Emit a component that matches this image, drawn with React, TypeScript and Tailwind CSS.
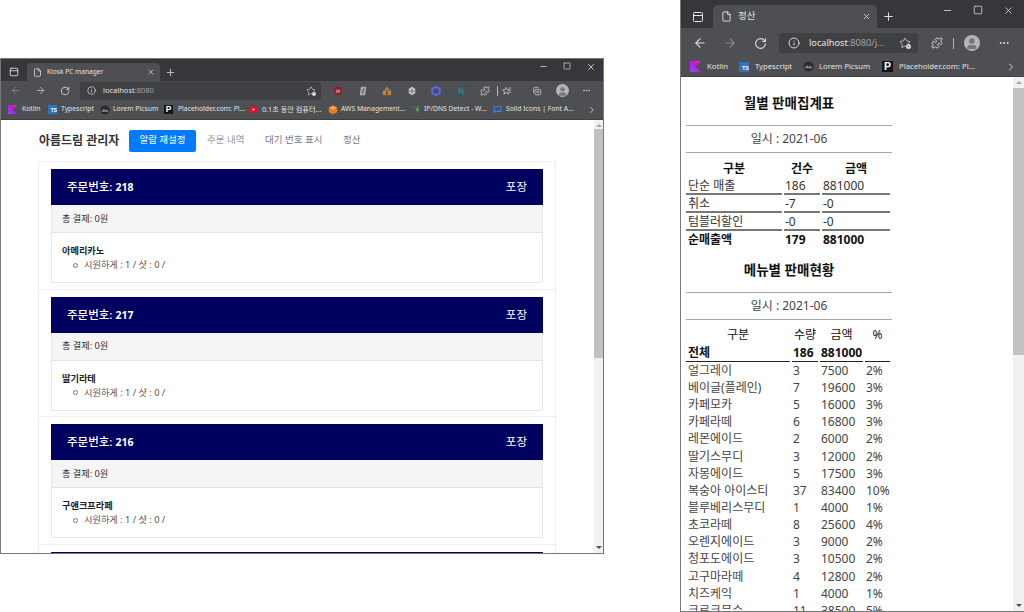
import React from "react";
import { ArrowLeft, ArrowRight, RotateCw, Info, Plus, X, Minus, Square, ChevronRight, Puzzle, MoreHorizontal, File, PanelTop, Star, User } from "lucide-react";

const KR = "font-['Noto_Sans','Noto_Sans_CJK_KR',sans-serif]";

const KotlinIcon = ({ s }: { s: number }) => (
  <svg width={s} height={s} viewBox="0 0 24 24" className="shrink-0">
    <defs><linearGradient id="kg" x1="0" y1="1" x2="1" y2="0"><stop offset="0" stopColor="#7f52ff" /><stop offset="0.6" stopColor="#c711e1" /><stop offset="1" stopColor="#e44857" /></linearGradient></defs>
    <path d="M0 24V0h24L12 12l12 12z" fill="url(#kg)" />
  </svg>
);
const TsIcon = ({ s }: { s: number }) => (
  <span className="shrink-0 bg-[#2f74c0] text-white font-bold flex items-end justify-end leading-none font-['Liberation_Sans',sans-serif]" style={{ width: s, height: s, fontSize: s * 0.55 }}>TS</span>
);
const PicIcon = ({ s }: { s: number }) => (
  <svg width={s} height={s} viewBox="0 0 24 24" className="shrink-0">
    <circle cx="12" cy="12" r="11" fill="#2a2b2d" />
    <path d="M3 16l6-7 4 4 3-3 5 6z" fill="#8a8b8d" />
  </svg>
);
const PIcon = ({ s }: { s: number }) => (
  <span className="shrink-0 bg-[#151515] text-white font-bold flex items-center justify-center leading-none font-['Liberation_Sans',sans-serif]" style={{ width: s, height: s, fontSize: s * 0.95 }}>P</span>
);
const YtIcon = ({ s }: { s: number }) => (
  <svg width={s} height={s} viewBox="0 0 24 24" className="shrink-0">
    <rect x="1" y="4" width="22" height="16" rx="4" fill="#e8112b" />
    <path d="M10 8.500l6 3.500-6 3.500z" fill="#fff" />
  </svg>
);
const AwsIcon = ({ s }: { s: number }) => (
  <svg width={s} height={s} viewBox="0 0 24 24" className="shrink-0">
    <path d="M12 1l10 5.500v11L12 23 2 17.500v-11z" fill="#ee7a1c" />
    <path d="M12 1l10 5.500-10 5.500L2 6.500z" fill="#f5a04a" />
  </svg>
);
const DnsIcon = ({ s }: { s: number }) => (
  <svg width={s} height={s} viewBox="0 0 24 24" className="shrink-0">
    <path d="M14 3l-6 10h5l-3 8 8-11h-5l3-7z" fill="#5fb56a" />
    <circle cx="5" cy="5" r="1.500" fill="#9aa0a6" />
  </svg>
);
const FlagIcon = ({ s }: { s: number }) => (
  <svg width={s} height={s} viewBox="0 0 24 24" className="shrink-0" fill="none" stroke="#3b82e6" strokeWidth="3">
    <path d="M3 22V4h18v13H5" />
  </svg>
);
const StarGear = ({ s }: { s: number }) => (
  <span className="relative shrink-0 block" style={{ width: s, height: s }}>
    <Star size={s} strokeWidth={1.6} color="#d5d5d6" />
    <span className="absolute right-0 bottom-0 w-[40%] h-[40%] rounded-full border-2 border-[#d5d5d6] bg-[#3f4043]" />
  </span>
);
const Avatar = ({ s }: { s: number }) => (
  <span className="shrink-0 rounded-full bg-[#b5b5b6] flex items-end justify-center overflow-hidden" style={{ width: s, height: s }}>
    <User size={s * 0.85} color="#77787a" fill="#77787a" />
  </span>
);
const Collections = ({ s }: { s: number }) => (
  <svg width={s} height={s} viewBox="0 0 24 24" fill="none" stroke="#d5d5d6" strokeWidth="1.800" className="shrink-0">
    <rect x="7" y="8" width="14" height="13" rx="3" /><path d="M4 16V7a4 4 0 0 1 4-4h8" /><path d="M10 14h8M14 11v6" />
  </svg>
);
const Fav = ({ s }: { s: number }) => (
  <svg width={s} height={s} viewBox="0 0 24 24" fill="none" stroke="#d5d5d6" strokeWidth="1.800" className="shrink-0">
    <path d="M10 3l2.500 6 6 .5-4.500 4 1.500 6-5.500-3.300L4.500 19.500l1.500-6-4.500-4 6-.5z" /><path d="M16 5h6M18 10h4M18 15h4" />
  </svg>
);

const ExtIcons = () => (
  <>
    <svg width="10" height="10" viewBox="0 0 24 24" className="shrink-0">
      <path d="M12 1l10 3-1 11c-1 4-5 6-9 8-4-2-8-4-9-8L2 4z" fill="#8e1b25" />
      <path d="M8 9v5a2 2 0 0 0 4 0V9M13 9l2 6 2-6" fill="none" stroke="#e9b9b9" strokeWidth="1.800" />
    </svg>
    <svg width="10" height="10" viewBox="0 0 24 24" className="shrink-0">
      <path d="M7 2h13l-3 20H4z" fill="#a9a9ac" />
      <path d="M14 6l-4 12" stroke="#4e4f52" strokeWidth="2.500" />
    </svg>
    <svg width="10" height="10" viewBox="0 0 24 24" className="shrink-0">
      <path d="M12 1l7 9H5z" fill="#8f8577" />
      <rect x="2" y="11" width="20" height="11" fill="#c8842a" />
      <rect x="10" y="13" width="4" height="9" fill="#4e4f52" />
    </svg>
    <svg width="10" height="10" viewBox="0 0 24 24" className="shrink-0">
      <path d="M12 2l8 5v10l-8 5-8-5V7z" fill="#c9c9cb" />
      <path d="M2 12h20M12 6v12" stroke="#6a6a6d" strokeWidth="2" />
    </svg>
    <svg width="10" height="10" viewBox="0 0 24 24" className="shrink-0" fill="none">
      <path d="M12 2l9 5v10l-9 5-9-5V7z" stroke="#5a66e6" strokeWidth="5" />
    </svg>
    <svg width="10" height="10" viewBox="0 0 24 24" className="shrink-0" fill="none">
      <rect x="2" y="2" width="20" height="20" stroke="#1e5f63" strokeWidth="2" strokeDasharray="3 2" />
      <path d="M8 18V6l8 12V6" stroke="#2b8a91" strokeWidth="3" />
    </svg>
    <Puzzle size={10} color="#d5d5d6" className="shrink-0" />
  </>
);

const Bm = ({ icon, text, w, size, gap }: { icon: React.ReactNode; text: string; w: number; size: string; gap: string }) => (
  <div className={`flex items-center shrink-0 ${gap}`} style={{ width: w }}>
    {icon}
    <span className={`${size} text-[#e3e3e4] whitespace-nowrap`}>{text}</span>
  </div>
);

const Scrollbar = ({ thumbTop, thumbH, w }: { thumbTop: number; thumbH: number; w: string }) => (
  <div className={`${w} shrink-0 bg-[#f1f1f1] relative h-full`}>
    <div className="absolute left-1/2 top-[4px] -translate-x-1/2 w-0 h-0 border-x-[3px] border-x-transparent border-b-[3px] border-b-[#a3a3a3]" />
    <div className="absolute left-0 right-0 bg-[#c1c1c1]" style={{ top: thumbTop, height: thumbH }} />
    <div className="absolute left-1/2 bottom-[4px] -translate-x-1/2 w-0 h-0 border-x-[3px] border-x-transparent border-t-[3px] border-t-[#505050]" />
  </div>
);

const orders = [
  { no: 218, item: "아메리카노" },
  { no: 217, item: "딸기라테" },
  { no: 216, item: "구앤크프라페" },
];

const OrderCard = ({ no, item }: { no: number; item: string }) => (
  <div className="px-[12px] pt-[7px] pb-[6px] border-b border-[#eeeeee] h-[127.500px] shrink-0">
    <div className="border border-[#e8e8e8] rounded-[2px] h-[114px]">
      <div className="-mx-px -mt-[1px] bg-[#00005f] h-[36px] flex items-center justify-between pl-[16px] pr-[16px] text-white">
        <span className="text-[11.500px] font-medium">주문번호: <b className="text-[10.500px]">{no}</b></span>
        <span className="text-[11.500px]">포장</span>
      </div>
      <div className="bg-[#f5f5f5] h-[28px] border-b border-[#e3e3e3] flex items-center pl-[10px] text-[9.200px] text-[#333]">총 결제: 0원</div>
      <div className="pl-[10px] pt-[11px] text-[9.200px] leading-[14px] text-[#333]">
        <div className="font-bold text-[#222]">{item}</div>
        <div className="flex items-center pl-[11px] text-[#555]">
          <span className="w-[5px] h-[5px] rounded-full border border-[#777] mr-[6px]" />
          <span>시원하게 : 1 / 샷 : 0 /</span>
        </div>
      </div>
    </div>
  </div>
);

const Th = ({ children, bold = true }: { children?: React.ReactNode; bold?: boolean }) => (
  <th className={`p-0 h-[18px] leading-[17px] text-[12px] ${bold ? "font-bold" : "font-normal"} text-center text-[#111]`}>{children}</th>
);

const Title = ({ t }: { t: string }) => (
  <div className="text-center text-[13.500px] font-bold text-[#111] leading-[18px]">{t}</div>
);
const Hr = () => <div className="h-px bg-[#a8a8a8]" />;
const DateLine = () => <div className="text-center text-[12px] leading-[26px] h-[26px] text-[#444]">일시 : 2021-06</div>;

const summary = [
  ["단순 매출", "186", "881000"],
  ["취소", "-7", "-0"],
  ["텀블러할인", "-0", "-0"],
];

const menu = [
  ["얼그레이", "3", "7500", "2%"],
  ["베이글(플레인)", "7", "19600", "3%"],
  ["카페모카", "5", "16000", "3%"],
  ["카페라떼", "6", "16800", "3%"],
  ["레몬에이드", "2", "6000", "2%"],
  ["딸기스무디", "3", "12000", "2%"],
  ["자몽에이드", "5", "17500", "3%"],
  ["복숭아 아이스티", "37", "83400", "10%"],
  ["블루베리스무디", "1", "4000", "1%"],
  ["초코라떼", "8", "25600", "4%"],
  ["오렌지에이드", "3", "9000", "2%"],
  ["청포도에이드", "3", "10500", "2%"],
  ["고구마라떼", "4", "12800", "2%"],
  ["치즈케익", "1", "4000", "1%"],
  ["크로크무슈", "11", "38500", "5%"],
];

export default function App() {
  return (
    <div className={`relative w-[1024px] h-[612px] overflow-hidden bg-white ${KR}`}>
      {/* Left window */}
      <div className="absolute left-0 top-[58px] w-[604px] h-[496px] border border-[#777] flex flex-col bg-white">
        <div className="h-[22px] bg-[#36373a] flex items-end shrink-0 relative">
          <div className="w-[26px] h-[18px] flex items-center justify-center"><PanelTop size={10} color="#e5e5e5" /></div>
          <div className="w-[133px] h-[18px] bg-[#4e4f52] rounded-t-[4px] flex items-center pl-[6px] pr-[5px]">
            <File size={9} color="#e0e0e0" />
            <span className="ml-[5px] text-[6.600px] text-[#e3e3e4] flex-1 whitespace-nowrap">Kiosk PC manager</span>
            <X size={8} color="#e0e0e0" />
          </div>
          <div className="w-[20px] h-[18px] flex items-center justify-center"><Plus size={11} color="#c5c5c6" /></div>
          <div className="ml-auto flex items-start self-start pt-[3px] pr-[7px] gap-[15px]">
            <Minus size={9} color="#e0e0e0" />
            <Square size={8} color="#e0e0e0" />
            <X size={10} color="#e0e0e0" />
          </div>
        </div>
        <div className="h-[19px] bg-[#4e4f52] flex items-center shrink-0 pl-[9px]">
          <ArrowLeft size={11} color="#85868a" />
          <ArrowRight size={11} color="#b8b8ba" className="ml-[14px]" />
          <RotateCw size={10} color="#dadada" className="ml-[14px]" />
          <div className="ml-[10px] w-[241px] h-[18px] bg-[#3f4043] rounded-[3px] flex items-center pl-[7px] pr-[5px]">
            <Info size={9} color="#d8d8d8" />
            <span className="ml-[7px] text-[7.500px] text-[#e5e5e5]">localhost<span className="text-[#a3a3a5]">:8080</span></span>
            <span className="ml-auto"><StarGear s={10} /></span>
          </div>
          <div className="ml-[12px] flex items-center gap-[14.500px]">
            <ExtIcons />
          </div>
          <span className="ml-[7px] w-px h-[10px] bg-[#b5b5b6]" />
          <span className="ml-[4px]"><Fav s={10} /></span>
          <span className="ml-[20px]"><Collections s={10} /></span>
          <span className="ml-[14px]"><Avatar s={13} /></span>
          <MoreHorizontal size={9} color="#d5d5d6" className="ml-[13px]" />
        </div>
        <div className="h-[20px] bg-[#4e4f52] border-b border-[#3f4043] flex items-center shrink-0 pl-[7px]">
          <Bm icon={<KotlinIcon s={9} />} text="Kotlin" w={40} size="text-[6.800px]" gap="gap-[5px]" />
          <Bm icon={<TsIcon s={9} />} text="Typescript" w={52} size="text-[6.800px]" gap="gap-[4px]" />
          <Bm icon={<PicIcon s={10} />} text="Lorem Picsum" w={64} size="text-[6.800px]" gap="gap-[3px]" />
          <Bm icon={<PIcon s={9} />} text="Placeholder.com: Pl..." w={85} size="text-[6.800px]" gap="gap-[5px]" />
          <Bm icon={<YtIcon s={9} />} text="0.1초 동안 컴퓨터..." w={79} size="text-[7.200px]" gap="gap-[4px]" />
          <Bm icon={<AwsIcon s={10} />} text="AWS Management..." w={84} size="text-[6.800px]" gap="gap-[3px]" />
          <Bm icon={<DnsIcon s={10} />} text="IP/DNS Detect - W..." w={81} size="text-[6.800px]" gap="gap-[2px]" />
          <Bm icon={<FlagIcon s={9} />} text="Solid Icons | Font A..." w={94} size="text-[6.800px]" gap="gap-[4px]" />
          <ChevronRight size={10} color="#d5d5d6" />
        </div>
        <div className="flex-1 flex min-h-0">
          <div className="flex-1 min-w-0 overflow-hidden">
            <div className="flex items-center h-[41px] pl-[38px]">
              <span className="text-[12px] font-bold text-[#333] w-[90px] whitespace-nowrap">아름드림 관리자</span>
              <span className="w-[67px] h-[22px] bg-[#007bff] rounded-[2px] text-white text-[9.500px] flex items-center justify-center">알람 재설정</span>
              <span className="ml-[11px] text-[9.500px] text-[#9a9a9a] w-[58px]">주문 내역</span>
              <span className="text-[9.500px] text-[#7a7a7a] w-[78px]">대기 번호 표시</span>
              <span className="text-[9.500px] text-[#7a7a7a]">정산</span>
            </div>
            <div className="ml-[37px] w-[518px] border border-[#eeeeee] rounded-t-[2px] flex flex-col">
              {orders.map((o) => <OrderCard key={o.no} {...o} />)}
              <div className="px-[12px] pt-[7px]"><div className="h-[10px] bg-[#00005f]" /></div>
            </div>
          </div>
          <Scrollbar thumbTop={9} thumbH={229} w="w-[9px]" />
        </div>
      </div>

      {/* Right window */}
      <div className="absolute left-[680px] top-0 w-[344px] h-[612px] border-l border-b border-[#777] flex flex-col bg-white">
        <div className="h-[28px] bg-[#36373a] flex items-end shrink-0">
          <div className="w-[32px] h-[23px] flex items-center justify-center pl-[2px]"><PanelTop size={12} color="#e5e5e5" /></div>
          <div className="w-[164px] h-[23px] bg-[#4e4f52] rounded-t-[5px] flex items-center pl-[8px] pr-[6px]">
            <File size={11} color="#e0e0e0" />
            <span className="ml-[6px] text-[9.500px] text-[#e3e3e4] flex-1">정산</span>
            <X size={9} color="#e5e5e5" />
          </div>
          <div className="w-[22px] h-[23px] flex items-center justify-center"><Plus size={13} color="#dcdcdc" /></div>
          <div className="ml-auto flex items-start self-start pt-[5px] pr-[10px] gap-[20px]">
            <Minus size={11} color="#d0d0d0" />
            <Square size={10} color="#d0d0d0" />
            <X size={11} color="#d0d0d0" />
          </div>
        </div>
        <div className="h-[30px] bg-[#4e4f52] flex items-center shrink-0 pl-[12px]">
          <ArrowLeft size={14} color="#e0e0e0" />
          <ArrowRight size={14} color="#8a8b8d" className="ml-[16px]" />
          <RotateCw size={13} color="#dadada" className="ml-[17px]" />
          <div className="ml-[12px] w-[139px] h-[20px] bg-[#3f4043] rounded-[3px] flex items-center pl-[9px] pr-[7px]">
            <Info size={12} color="#d8d8d8" />
            <span className="ml-[9px] text-[9.200px] text-[#e5e5e5] whitespace-nowrap">localhost<span className="text-[#a3a3a5]">:8080/j...</span></span>
            <span className="ml-auto"><StarGear s={12} /></span>
          </div>
          <Puzzle size={12} color="#d5d5d6" className="ml-[13px]" />
          <span className="ml-[10px] w-px h-[11px] bg-[#b5b5b6]" />
          <span className="ml-[10px]"><Avatar s={16} /></span>
          <MoreHorizontal size={12} color="#e5e5e5" className="ml-[18px]" />
        </div>
        <div className="h-[19px] bg-[#4e4f52] border-b border-[#3f4043] flex items-center shrink-0 pl-[9px]">
          <Bm icon={<KotlinIcon s={11} />} text="Kotlin" w={49} size="text-[7.700px]" gap="gap-[6px]" />
          <Bm icon={<TsIcon s={10} />} text="Typescript" w={64} size="text-[7.700px]" gap="gap-[6px]" />
          <Bm icon={<PicIcon s={11} />} text="Lorem Picsum" w={79} size="text-[7.700px]" gap="gap-[5px]" />
          <Bm icon={<PIcon s={11} />} text="Placeholder.com: Pl..." w={123} size="text-[7.700px]" gap="gap-[6px]" />
          <ChevronRight size={12} color="#d5d5d6" />
        </div>
        <div className="flex-1 flex min-h-0">
          <div className="flex-1 min-w-0 overflow-hidden pl-[5px]">
            <div className="w-[206px] pt-[17px]">
              <Title t="월별 판매집계표" />
              <div className="h-[13px]" />
              <Hr />
              <DateLine />
              <Hr />
              <table className="w-[208px] -ml-[2px] border-separate border-spacing-x-[2px] border-spacing-y-0 mt-[6px] table-fixed">
                <colgroup><col className="w-[96px]" /><col className="w-[36px]" /><col /></colgroup>
                <thead><tr><Th>구분</Th><Th>건수</Th><Th>금액</Th></tr></thead>
                <tbody>
                  {summary.map((r) => (
                    <tr key={r[0]}>
                      {r.map((c, i) => <td key={i} className={`p-0 pt-[2px] ${i === 0 ? "pl-[2px]" : "pl-[1px]"} h-[17.750px] leading-[14px] text-[12px] text-[#333] border-b-2 border-[#777] whitespace-nowrap`}>{c}</td>)}
                    </tr>
                  ))}
                  <tr>
                    {["순매출액", "179", "881000"].map((c, i) => <td key={c} className={`p-0 ${i === 0 ? "pl-[2px]" : "pl-[1px]"} h-[17.750px] leading-[17px] text-[12px] font-bold text-[#111]`}>{c}</td>)}
                  </tr>
                </tbody>
              </table>
              <div className="mt-[12px]"><Title t="메뉴별 판매현황" /></div>
              <div className="h-[13px]" />
              <Hr />
              <DateLine />
              <Hr />
              <table className="w-[208px] -ml-[2px] border-separate border-spacing-x-[2px] border-spacing-y-0 mt-[6px] table-fixed">
                <colgroup><col className="w-[104px]" /><col className="w-[26px]" /><col className="w-[43px]" /><col /></colgroup>
                <thead><tr><Th bold={false}>구분</Th><Th bold={false}>수량</Th><Th bold={false}>금액</Th><Th bold={false}>%</Th></tr></thead>
                <tbody>
                  <tr>
                    {["전체", "186", "881000", ""].map((c, i) => <td key={i} className={`p-0 ${i === 0 ? "pl-[2px]" : "pl-[1px]"} h-[18px] leading-[17px] text-[12px] font-bold text-[#111] border-b border-[#222] whitespace-nowrap`}>{c}</td>)}
                  </tr>
                  {menu.map((r) => (
                    <tr key={r[0]}>
                      {r.map((c, i) => <td key={i} className={`p-0 ${i === 0 ? "pl-[2px]" : "pl-[1px]"} h-[17.150px] leading-[17px] text-[12px] text-[#444] whitespace-nowrap`}>{c}</td>)}
                    </tr>
                  ))}
                </tbody>
              </table>
            </div>
          </div>
          <Scrollbar thumbTop={11} thumbH={267} w="w-[11px]" />
        </div>
      </div>
    </div>
  );
}
